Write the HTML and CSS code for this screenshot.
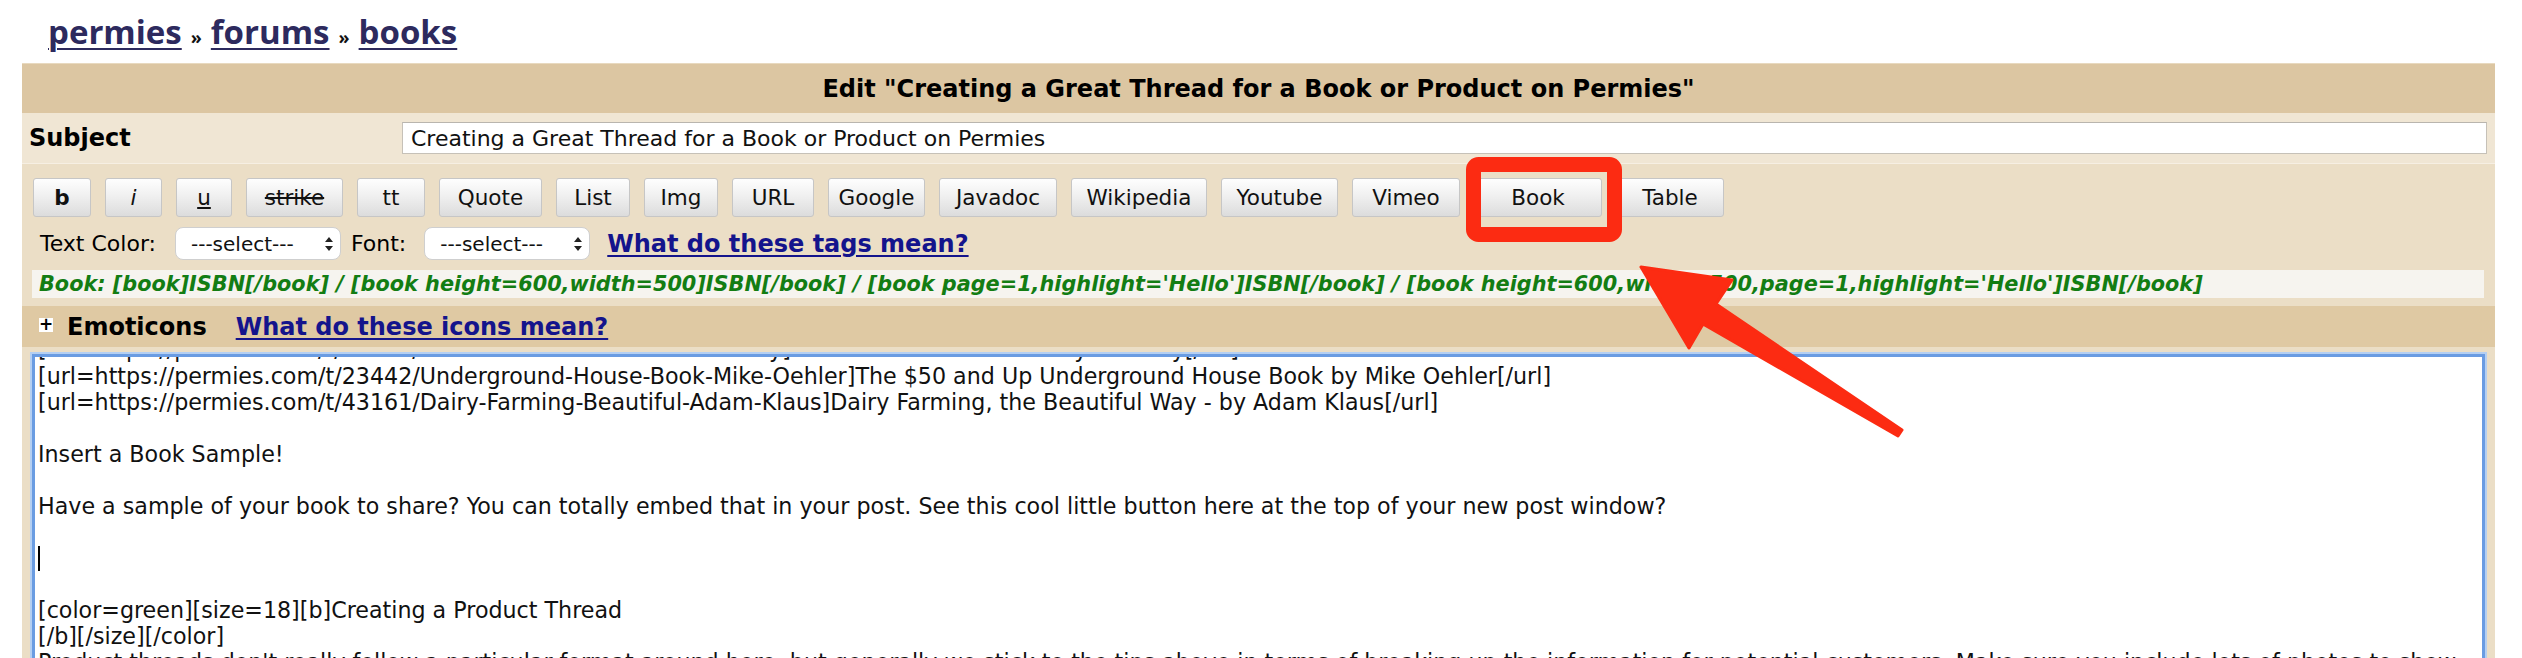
FILE: index.html
```html
<!DOCTYPE html>
<html lang="en">
<head>
<meta charset="utf-8">
<title>Edit - permies books</title>
<link rel="stylesheet" href="styles.css">
</head>
<body>
<div class="page">
  <nav class="crumbs">
    <a href="#">permies</a><span class="sep">»</span><a href="#">forums</a><span class="sep">»</span><a href="#">books</a>
  </nav>
  <div class="box">
    <div class="title">Edit "Creating a Great Thread for a Book or Product on Permies"</div>
    <div class="subject-row">
      <label class="subject-label" for="subj">Subject</label>
      <input id="subj" class="subject-input" type="text" value="Creating a Great Thread for a Book or Product on Permies">
    </div>
    <div class="toolbar">
      <div class="buttons">
        <button class="btn btn-b">b</button>
        <button class="btn btn-i">i</button>
        <button class="btn btn-u">u</button>
        <button class="btn btn-strike">strike</button>
        <button class="btn btn-tt">tt</button>
        <button class="btn btn-quote">Quote</button>
        <button class="btn btn-list">List</button>
        <button class="btn btn-img">Img</button>
        <button class="btn btn-url">URL</button>
        <button class="btn btn-google">Google</button>
        <button class="btn btn-javadoc">Javadoc</button>
        <button class="btn btn-wiki">Wikipedia</button>
        <button class="btn btn-youtube">Youtube</button>
        <button class="btn btn-vimeo">Vimeo</button>
        <button class="btn btn-book">Book</button>
        <button class="btn btn-table">Table</button>
      </div>
      <div class="selects">
        <span class="lbl">Text Color:</span>
        <div class="select"><span>---select---</span><svg class="updown" width="8" height="14" viewBox="0 0 8 14"><path d="M4 0 L8 5 L0 5 Z M4 14 L8 9 L0 9 Z" fill="#222"/></svg></div>
        <span class="lbl lbl-font">Font:</span>
        <div class="select"><span>---select---</span><svg class="updown" width="8" height="14" viewBox="0 0 8 14"><path d="M4 0 L8 5 L0 5 Z M4 14 L8 9 L0 9 Z" fill="#222"/></svg></div>
        <a class="help help-tags" href="#">What do these tags mean?</a>
      </div>
      <div class="hint">Book: [book]ISBN[/book] / [book height=600,width=500]ISBN[/book] / [book page=1,highlight='Hello']ISBN[/book] / [book height=600,width=500,page=1,highlight='Hello']ISBN[/book]</div>
    </div>
    <div class="emoticons">
      <span class="plus">+</span>
      <span class="emo-title">Emoticons</span>
      <a class="help help-icons" href="#">What do these icons mean?</a>
    </div>
    <div class="editor-wrap">
      <div class="editor" role="textbox" aria-multiline="true">
        <div class="clip-line"><div class="clip-inner">[url=https://permies.com/t/40931/Earth-Sheltered-Houses-Rob-Roy]Earth-Sheltered Houses by Rob Roy[/url]</div></div>
        <div class="editor-text">[url=https://permies.com/t/23442/Underground-House-Book-Mike-Oehler]The $50 and Up Underground House Book by Mike Oehler[/url]
[url=https://permies.com/t/43161/Dairy-Farming-Beautiful-Adam-Klaus]Dairy Farming, the Beautiful Way - by Adam Klaus[/url]

Insert a Book Sample!

Have a sample of your book to share? You can totally embed that in your post. See this cool little button here at the top of your new post window?

<span class="caret"></span>

[color=green][size=18][b]Creating a Product Thread
[/b][/size][/color]
Product threads don't really follow a particular format around here, but generally we stick to the tips above in terms of breaking up the information for potential customers. Make sure you include lots of photos to show what it looks like.</div>
      </div>
    </div>
  </div>
</div>
<svg class="annot" width="2522" height="658" viewBox="0 0 2522 658" aria-hidden="true">
  <rect x="1473.5" y="164.5" width="141" height="70" rx="5" ry="5" fill="none" stroke="#fc2b12" stroke-width="15"/>
  <polygon points="1641,267 1732,280 1716,304 1902,430 1898,436 1703,324 1689,348" fill="#fc2b12" stroke="#fc2b12" stroke-width="3" stroke-linejoin="round"/>
</svg>
</body>
</html>
```

FILE: styles.css
```css
html, body {
  margin: 0;
  padding: 0;
  background: #ffffff;
}

body {
  font-family: "DejaVu Sans", Verdana, sans-serif;
  color: #000;
  height: 658px;
  overflow: hidden;
  position: relative;
}

.page {
  padding: 0 27px 0 22px;
}

/* breadcrumb */
.crumbs {
  box-sizing: border-box;
  height: 63px;
  padding: 9px 0 0 26px;
  font-family: "Open Sans", "DejaVu Sans", sans-serif;
  font-weight: 700;
  font-size: 33px;
  line-height: 46px;
  display: flex;
  align-items: baseline;
}

.crumbs a {
  color: #2d2a5e;
  text-decoration: underline;
  text-decoration-thickness: 2px;
  text-underline-offset: 4px;
}

.crumbs .sep {
  font-size: 18px;
  color: #111;
  margin: 0 9px;
}

/* main box */
.box {
  background: #ebdec6;
}

.title {
  height: 50px;
  background: #dcc6a2;
  border-top: 1px solid #e8d9bf;
  box-sizing: border-box;
  display: flex;
  align-items: center;
  justify-content: center;
  font-weight: 700;
  font-size: 24px;
}

.subject-row {
  height: 51px;
  box-sizing: border-box;
  background: #f0e6d4;
  border-bottom: 1px solid #f6efe3;
  display: flex;
  align-items: center;
  padding: 0 8px 0 7px;
}

.subject-label {
  width: 373px;
  flex: none;
  font-weight: 700;
  font-size: 24px;
}

.subject-input {
  flex: 1;
  height: 32px;
  box-sizing: border-box;
  border: 1px solid #c6c1b8;
  border-top-color: #b9b5ae;
  background: #fff;
  padding: 0 8px;
  font-family: "DejaVu Sans", Verdana, sans-serif;
  font-size: 22px;
  color: #111;
  outline: none;
}

/* toolbar */
.toolbar {
  padding: 14px 11px 8px 10px;
}

.buttons {
  display: flex;
  gap: 14px;
  padding-left: 1px;
}

.btn {
  height: 39px;
  box-sizing: border-box;
  padding: 0;
  border: 1px solid #c6c6c6;
  border-radius: 3px;
  background: linear-gradient(#fefefe, #f0f0f0 45%, #dcdcdc);
  font-family: "DejaVu Sans", Verdana, sans-serif;
  font-size: 21.5px;
  color: #111;
}

.btn-b { width: 58px; font-weight: 700; }
.btn-i { width: 57px; font-style: italic; }
.btn-u { width: 56px; text-decoration: underline; }
.btn-strike { width: 97px; text-decoration: line-through; }
.btn-tt { width: 68px; }
.btn-quote { width: 103px; }
.btn-list { width: 74px; }
.btn-img { width: 74px; }
.btn-url { width: 82px; }
.btn-google { width: 97px; }
.btn-javadoc { width: 118px; }
.btn-wiki { width: 136px; }
.btn-youtube { width: 117px; }
.btn-vimeo { width: 108px; }
.btn-book { width: 128px; }
.btn-table { width: 108px; }

.selects {
  margin-top: 10px;
  height: 33px;
  display: flex;
  align-items: center;
  padding-left: 8px;
  font-size: 22px;
}

.lbl {
  margin-right: 19px;
}

.lbl-font {
  margin-left: 10px;
  margin-right: 18px;
}

.select {
  width: 166px;
  height: 33px;
  box-sizing: border-box;
  background: #fff;
  border: 1px solid #cfcfcf;
  border-radius: 8px;
  display: flex;
  align-items: center;
  justify-content: space-between;
  padding: 0 7px 0 15px;
  font-size: 20px;
  color: #111;
}

.help {
  color: #14148c;
  font-weight: 700;
  font-size: 24px;
  text-decoration: underline;
  text-decoration-thickness: 2px;
  text-underline-offset: 3px;
}

.help-tags {
  margin-left: 17px;
}

.hint {
  margin-top: 10px;
  height: 28px;
  background: #f6f4ef;
  display: flex;
  align-items: center;
  padding-left: 7px;
  color: #137d13;
  font-weight: 700;
  font-style: italic;
  font-size: 20.8px;
  white-space: nowrap;
  overflow: hidden;
}

/* emoticons bar */
.emoticons {
  height: 41px;
  background: #dfc9a3;
  display: flex;
  align-items: center;
  padding-left: 17px;
}

.plus {
  width: 14px;
  height: 14px;
  background: #fff;
  font-weight: 700;
  font-size: 17px;
  line-height: 13px;
  text-align: center;
  align-self: flex-start;
  margin-top: 12px;
}

.emo-title {
  margin-left: 14px;
  font-weight: 700;
  font-size: 24px;
}

.help-icons {
  margin-left: 29px;
}

/* editor */
.editor-wrap {
  padding: 7px 10px 0 10px;
  height: 320px;
}

.editor {
  height: 400px;
  background: #fff;
  border: 3px solid #6a9ce2;
  box-shadow: 0 0 0 2px #b4cff2;
  padding: 0 3px;
  overflow: hidden;
  font-size: 22.2px;
  line-height: 26px;
  color: #111;
}

.clip-line {
  height: 6px;
  overflow: hidden;
}

.clip-inner {
  margin-top: -21px;
  white-space: nowrap;
}

.editor-text {
  white-space: pre-wrap;
}

.caret {
  display: inline-block;
  width: 2px;
  height: 25px;
  background: #000;
  vertical-align: -5px;
}

/* annotation overlay */
.annot {
  position: absolute;
  top: 0;
  left: 0;
  pointer-events: none;
}
```
